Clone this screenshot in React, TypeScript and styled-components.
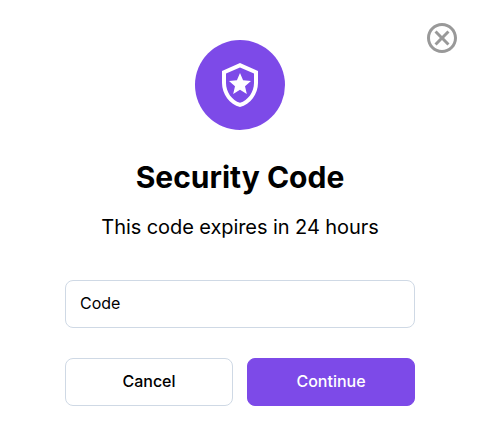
import React from "react";
import styled, { createGlobalStyle } from "styled-components";
import { MdOutlineLocalPolice, MdOutlineCancel } from "react-icons/md";

const GlobalStyle = createGlobalStyle`
  *, *::before, *::after { box-sizing: border-box; }
  body { margin: 0; background: #fff; font-family: Inter, sans-serif; color: #000; }
`;

const Dialog = styled.form`
  position: relative;
  display: flex;
  flex-direction: column;
  align-items: center;
  width: 480px;
  height: 446px;
  padding: 40px 65px;
`;

const CloseButton = styled.button`
  position: absolute;
  top: 20px;
  right: 20px;
  display: flex;
  padding: 0;
  border: 0;
  background: none;
  color: #999;
`;

const Badge = styled.div`
  display: flex;
  align-items: center;
  justify-content: center;
  width: 90px;
  height: 90px;
  border-radius: 50%;
  background: #7d4ae8;
  color: #fff;
`;

const Title = styled.h1`
  margin: 29px 0 0;
  font-size: 30px;
  font-weight: 700;
  line-height: 36px;
`;

const Message = styled.p`
  margin: 20px 0 0;
  font-size: 20px;
  line-height: 24px;
  letter-spacing: -0.07px;
`;

const CodeInput = styled.input`
  width: 100%;
  height: 48px;
  margin-top: 41px;
  padding: 0 14px 2px;
  border: 1px solid #cfd9e5;
  border-radius: 8px;
  font: 400 16px Inter, sans-serif;
  &::placeholder { color: #000; opacity: 1; }
`;

const Actions = styled.div`
  display: grid;
  grid-template-columns: 1fr 1fr;
  gap: 14px;
  width: 100%;
  margin-top: 30px;
`;

const Button = styled.button<{ $primary?: boolean }>`
  height: 48px;
  padding: 0 0 2px;
  border: 1px solid ${(p) => (p.$primary ? "#7d4ae8" : "#cfd9e5")};
  border-radius: 8px;
  background: ${(p) => (p.$primary ? "#7d4ae8" : "#fff")};
  color: ${(p) => (p.$primary ? "#fff" : "#000")};
  font: 500 16px Inter, sans-serif;
`;

export default function App() {
  return (
    <>
      <GlobalStyle />
      <Dialog>
        <CloseButton type="button" aria-label="Close">
          <MdOutlineCancel size={36} />
        </CloseButton>
        <Badge>
          <MdOutlineLocalPolice size={48} />
        </Badge>
        <Title>Security Code</Title>
        <Message>This code expires in 24 hours</Message>
        <CodeInput placeholder="Code" aria-label="Code" />
        <Actions>
          <Button type="button">Cancel</Button>
          <Button type="button" $primary>Continue</Button>
        </Actions>
      </Dialog>
    </>
  );
}
